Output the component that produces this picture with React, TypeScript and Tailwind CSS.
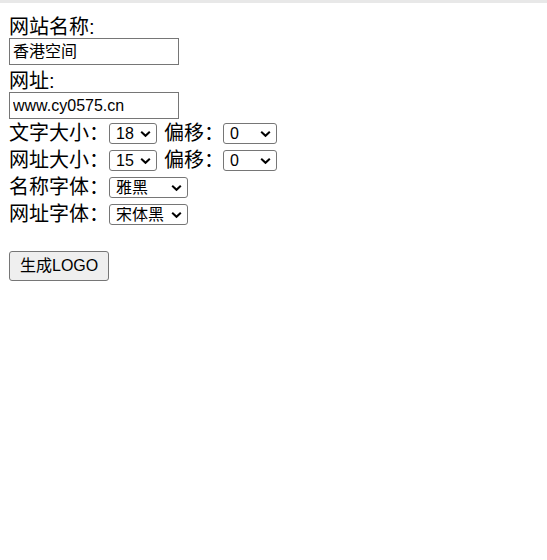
import React from 'react';

const font = { fontFamily: '"Liberation Sans", "Noto Sans CJK SC", sans-serif' };

const Chevron = () => (
  <svg
    className="absolute right-[6px] top-1/2 -translate-y-1/2 pointer-events-none"
    width="11"
    height="7"
    viewBox="0 0 11 7"
  >
    <polyline points="1.2,1.2 5.5,5.3 9.8,1.2" fill="none" stroke="#000" strokeWidth="2" />
  </svg>
);

type SelProps = { value: string; options: string[]; width: string };

const Sel = ({ value, options, width }: SelProps) => (
  <span className={`relative shrink-0 inline-flex ${width}`}>
    <select
      defaultValue={value}
      className="appearance-none w-full h-[21px] border border-[#767676] rounded-[3px] bg-white text-[16px] leading-none pl-[6px] text-black"
    >
      {options.map((o) => (
        <option key={o}>{o}</option>
      ))}
    </select>
    <Chevron />
  </span>
);

const fonts = ['雅黑', '宋体', '宋体黑'];

export default function App() {
  return (
    <div className="min-h-[560px] bg-white text-black" style={font}>
      <div className="h-[3px] bg-[#e8e8e8]" />
      <form className="pl-[9px] pt-[8px] text-[20px] leading-[27px] whitespace-nowrap">
        <div className="h-[27px] pt-[5px] leading-[22px]">网站名称:</div>
        <input
          type="text"
          defaultValue="香港空间"
          className="block w-[170px] h-[27px] border border-[#767676] px-[3px] text-[16px] text-black"
        />
        <div className="h-[27px] pt-[5px] leading-[22px]">网址:</div>
        <input
          type="text"
          defaultValue="www.cy0575.cn"
          className="block w-[170px] h-[27px] border border-[#767676] px-[3px] text-[16px] text-black"
        />
        <div className="flex items-center h-[27px] pt-[2px]">
          <span className="w-[100px] shrink-0">文字大小：</span>
          <Sel value="18" options={['12', '14', '16', '18', '20']} width="w-[48px]" />
          <span className="ml-[7px] w-[59px] shrink-0">偏移：</span>
          <Sel value="0" options={['0', '1', '2']} width="w-[54px]" />
        </div>
        <div className="flex items-center h-[27px] pt-[2px]">
          <span className="w-[100px] shrink-0">网址大小：</span>
          <Sel value="15" options={['12', '15', '18']} width="w-[48px]" />
          <span className="ml-[7px] w-[59px] shrink-0">偏移：</span>
          <Sel value="0" options={['0', '1', '2']} width="w-[54px]" />
        </div>
        <div className="flex items-center h-[27px] pt-[2px]">
          <span className="w-[100px] shrink-0">名称字体：</span>
          <Sel value="雅黑" options={fonts} width="w-[79px]" />
        </div>
        <div className="flex items-center h-[27px] pt-[2px]">
          <span className="w-[100px] shrink-0">网址字体：</span>
          <Sel value="宋体黑" options={fonts} width="w-[79px]" />
        </div>
        <div className="h-[24px]" />
        <button
          type="button"
          className="h-[30px] px-[10px] bg-[#efefef] border border-[#767676] rounded-[3px] text-[16px] leading-none text-black"
        >
          生成LOGO
        </button>
      </form>
    </div>
  );
}
